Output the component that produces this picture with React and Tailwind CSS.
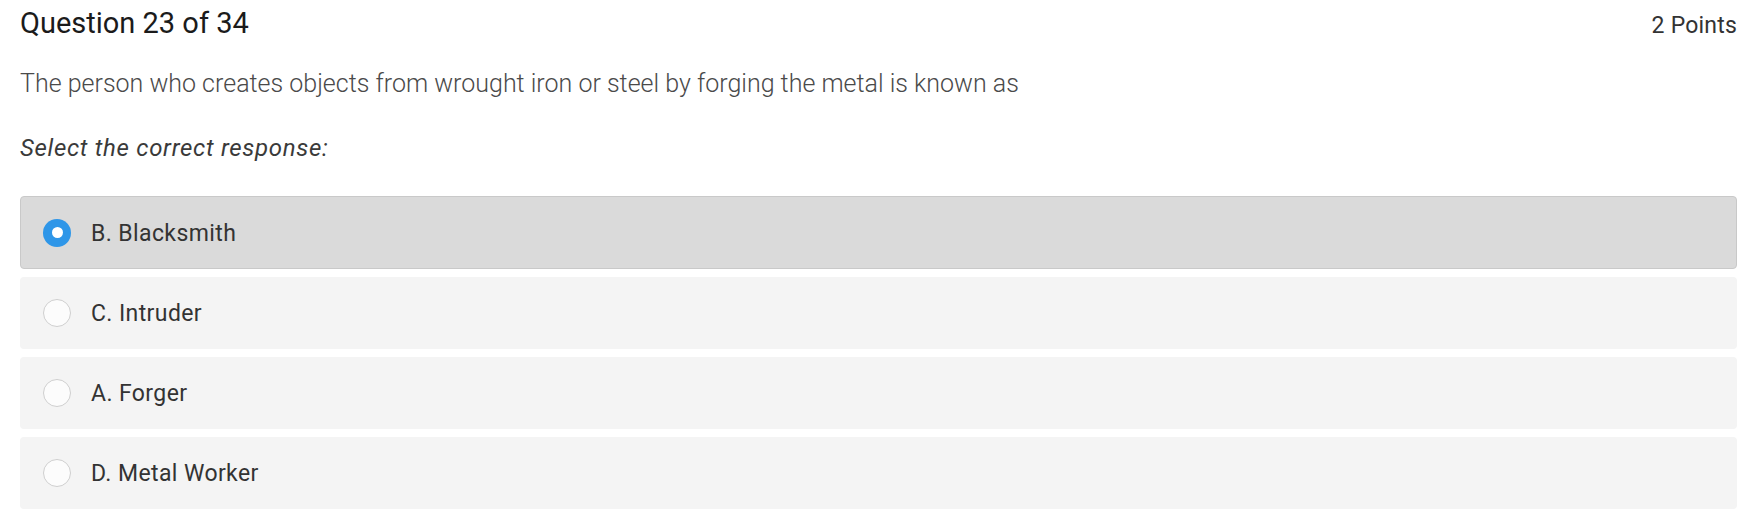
import React from "react";

const options = [
  { label: "B. Blacksmith", selected: true },
  { label: "C. Intruder", selected: false },
  { label: "A. Forger", selected: false },
  { label: "D. Metal Worker", selected: false },
];

function Radio({ selected }) {
  if (selected) {
    return (
      <span className="flex h-[28px] w-[28px] shrink-0 items-center justify-center rounded-full bg-[#2e96e8]">
        <span className="h-[11px] w-[11px] rounded-full bg-white" />
      </span>
    );
  }
  return (
    <span className="h-[28px] w-[28px] shrink-0 rounded-full border-[1.5px] border-[#cfcfcf] bg-[#fcfcfc]" />
  );
}

export default function App() {
  return (
    <div
      className="min-h-[525px] w-full bg-white pl-[20px] pr-[3px] pt-[6px]"
      style={{ fontFamily: "Roboto, 'Liberation Sans', sans-serif" }}
    >
      <div className="flex items-baseline justify-between">
        <h1 className="text-[29px] leading-[34px] font-normal text-[#1b1b1b]">Question 23 of 34</h1>
        <span className="text-[23px] leading-[34px] tracking-[0.2px] text-[#333]">2 Points</span>
      </div>
      <p className="mt-[26px] text-[25px] leading-[30px] font-light text-[#4a4a4a]">
        The person who creates objects from wrought iron or steel by forging the metal is known as
      </p>
      <p className="mt-[34px] text-[24px] leading-[30px] italic tracking-[0.7px] text-[#3a3a3a]">
        Select the correct response:
      </p>
      <div className="mt-[33px] flex flex-col gap-[8px]">
        {options.map((o) => (
          <div
            key={o.label}
            className={
              o.selected
                ? "flex h-[73px] items-center rounded-[4px] border border-[#c9c9c9] bg-[#dadada] pl-[22px]"
                : "flex h-[72px] items-center rounded-[4px] bg-[#f4f4f4] pl-[23px]"
            }
          >
            <Radio selected={o.selected} />
            <span className="ml-[20px] pt-[3px] text-[23px] tracking-[0.4px] text-[#333]">{o.label}</span>
          </div>
        ))}
      </div>
    </div>
  );
}
